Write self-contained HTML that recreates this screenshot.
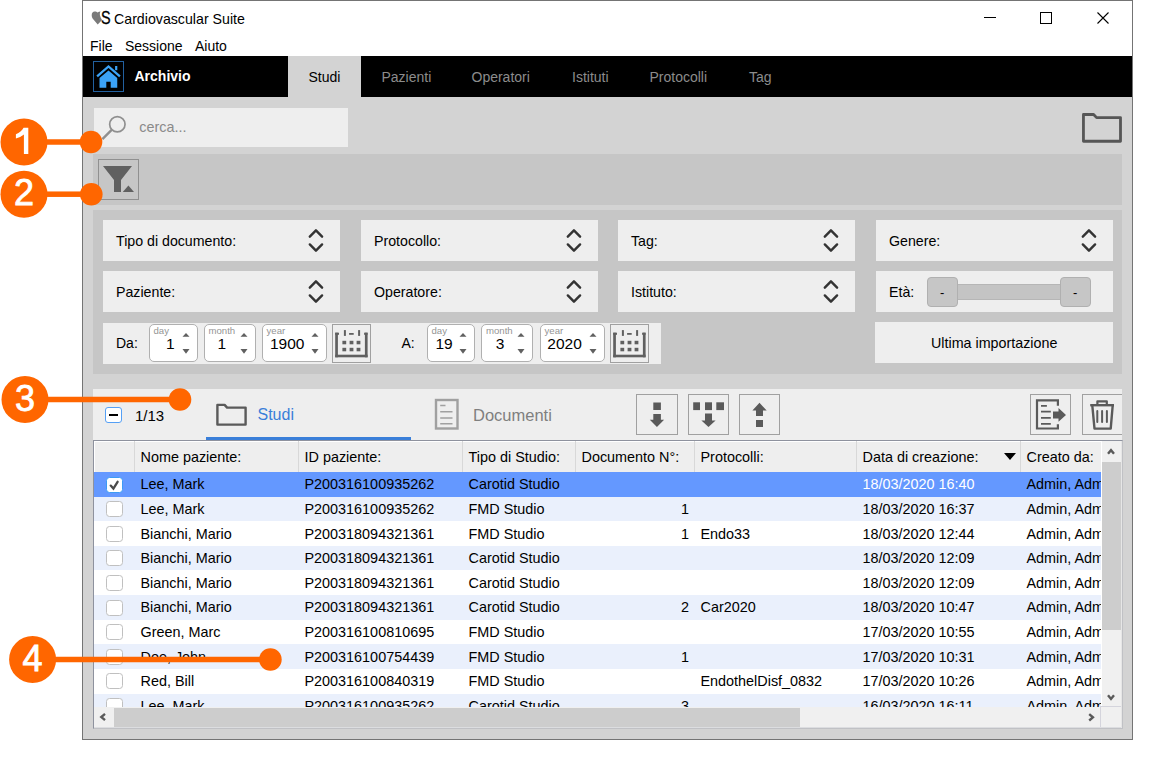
<!DOCTYPE html>
<html><head><meta charset="utf-8">
<style>
*{box-sizing:border-box;margin:0;padding:0}
html,body{width:1153px;height:760px;overflow:hidden;background:#fff;font-family:"Liberation Sans",sans-serif;color:#000;position:relative}
.a{position:absolute}
.t{position:absolute;white-space:pre}
svg{position:absolute;overflow:visible}
</style></head><body>
<div class="a" style="left:82px;top:0px;width:1051px;height:740px;background:#d3d3d3;border:1px solid #747474;"></div>
<div class="a" style="left:83px;top:1px;width:1049px;height:55px;background:#fff;"></div>
<svg style="left:88px;top:9.1px" width="24" height="20" viewBox="0 0 24 20"><path d="M3.7 6.2 C3.7 3.8 5 2.5 6.6 2.5 C8 2.5 9 3 9.7 3.6 C10.4 3 11.3 2.6 12.5 2.6 C11.8 3.8 11.7 5.2 12 6.4 C12.3 8 13 9.6 14 10.9 L9.7 15.4 L4.6 9.4 C4 8.5 3.7 7.4 3.7 6.2 Z" fill="#7a7a7a"/></svg>
<div class="t" style="left:101px;top:7.1px;font-size:18.5px;line-height:21px;transform:scaleX(0.78);transform-origin:0 0;color:#000;-webkit-text-stroke:0.35px #000">S</div>
<div class="t" style="left:114px;top:11.08px;font-size:14.2px;line-height:16px;color:#000;">Cardiovascular Suite</div>
<div class="a" style="left:984px;top:17px;width:12px;height:1px;background:#000;"></div>
<div class="a" style="left:1040px;top:12px;width:12px;height:12px;border:1px solid #000;"></div>
<svg style="left:1097px;top:12px" width="12" height="12" viewBox="0 0 12 12"><path d="M0.5 0.5 L11.5 11.5 M11.5 0.5 L0.5 11.5" stroke="#000" stroke-width="1.1"/></svg>
<div class="t" style="left:90px;top:37.65px;font-size:14px;line-height:16px;">File</div>
<div class="t" style="left:125px;top:37.65px;font-size:14px;line-height:16px;">Sessione</div>
<div class="t" style="left:195px;top:37.65px;font-size:14px;line-height:16px;">Aiuto</div>
<div class="a" style="left:83px;top:56px;width:1049px;height:41px;background:#000;"></div>
<div class="a" style="left:288px;top:56px;width:73px;height:41px;background:#d3d3d3;"></div>
<div class="a" style="left:93px;top:61px;width:31px;height:31px;border:1px solid #22609f;"></div>
<svg style="left:93px;top:61px" width="31" height="31" viewBox="0 0 31 31"><path d="M6.5 16.9 L15.5 9.4 L24.25 16.9 L24.25 26.7 L17.7 26.7 L17.7 20.8 L13.3 20.8 L13.3 26.7 L6.5 26.7 Z" fill="#3ba2f6"/><rect x="22.1" y="5" width="2.2" height="4.2" fill="#3ba2f6"/><path d="M4.1 15.3 L15.5 5.4 L26.9 15.3" stroke="#3ba2f6" stroke-width="2.3" fill="none"/></svg>
<div class="t" style="left:134.5px;top:68.15px;font-size:14px;line-height:16px;color:#fff;font-weight:700;">Archivio</div>
<div class="t" style="left:308.5px;top:69.15px;font-size:14px;line-height:16px;color:#000;">Studi</div>
<div class="t" style="left:381.5px;top:69.15px;font-size:14px;line-height:16px;color:#8c8c8c;">Pazienti</div>
<div class="t" style="left:471.5px;top:69.15px;font-size:14px;line-height:16px;color:#8c8c8c;">Operatori</div>
<div class="t" style="left:572px;top:69.15px;font-size:14px;line-height:16px;color:#8c8c8c;">Istituti</div>
<div class="t" style="left:649.5px;top:69.15px;font-size:14px;line-height:16px;color:#8c8c8c;">Protocolli</div>
<div class="t" style="left:749px;top:69.15px;font-size:14px;line-height:16px;color:#8c8c8c;">Tag</div>
<div class="a" style="left:94px;top:108px;width:254px;height:39px;background:#eeeeee;"></div>
<svg style="left:98px;top:114px" width="30" height="28" viewBox="0 0 30 28"><circle cx="19.35" cy="10.25" r="7.7" stroke="#8f8f8f" stroke-width="1.7" fill="none"/><path d="M13.9 15.7 L4.4 25.2" stroke="#8f8f8f" stroke-width="2.4"/></svg>
<div class="t" style="left:139.3px;top:118.51px;font-size:14.4px;line-height:17px;color:#8a8a8a;">cerca...</div>
<svg style="left:1082px;top:113px" width="41" height="30" viewBox="0 0 41 30"><path d="M1.45 1.5 L11.6 1.5 L14.6 4.6 L38.5 4.6 L38.5 28.25 L1.45 28.25 Z" stroke="#565656" stroke-width="2.8" fill="none" stroke-linejoin="round"/></svg>
<div class="a" style="left:93px;top:154px;width:1029px;height:51px;background:#c6c6c6;"></div>
<div class="a" style="left:98px;top:159px;width:41px;height:41px;border:1px solid #909090;"></div>
<svg style="left:98px;top:159px" width="41" height="41" viewBox="0 0 41 41"><path d="M5 7 L34 7 L23 21 L23 33 L16 33 L16 21 Z" fill="#606060"/><path d="M24.8 33 L30.4 26.5 L36 33 Z" fill="#606060"/></svg>
<div class="a" style="left:93px;top:210px;width:1029px;height:164px;background:#c6c6c6;"></div>
<div class="a" style="left:103px;top:220px;width:237px;height:41px;background:#eeeeee;"></div>
<div class="t" style="left:116px;top:232.58px;font-size:14.2px;line-height:16px;">Tipo di documento:</div>
<svg style="left:307.5px;top:228px" width="16" height="24" viewBox="0 0 16 24"><path d="M1.8 8.7 L7.95 2.3 L14.1 8.7 M1.8 16.4 L7.95 22.7 L14.1 16.4" stroke="#333" stroke-width="2.4" fill="none" stroke-linecap="round" stroke-linejoin="round"/></svg>
<div class="a" style="left:361px;top:220px;width:237px;height:41px;background:#eeeeee;"></div>
<div class="t" style="left:374px;top:232.58px;font-size:14.2px;line-height:16px;">Protocollo:</div>
<svg style="left:565.5px;top:228px" width="16" height="24" viewBox="0 0 16 24"><path d="M1.8 8.7 L7.95 2.3 L14.1 8.7 M1.8 16.4 L7.95 22.7 L14.1 16.4" stroke="#333" stroke-width="2.4" fill="none" stroke-linecap="round" stroke-linejoin="round"/></svg>
<div class="a" style="left:618px;top:220px;width:237px;height:41px;background:#eeeeee;"></div>
<div class="t" style="left:631px;top:232.58px;font-size:14.2px;line-height:16px;">Tag:</div>
<svg style="left:822.5px;top:228px" width="16" height="24" viewBox="0 0 16 24"><path d="M1.8 8.7 L7.95 2.3 L14.1 8.7 M1.8 16.4 L7.95 22.7 L14.1 16.4" stroke="#333" stroke-width="2.4" fill="none" stroke-linecap="round" stroke-linejoin="round"/></svg>
<div class="a" style="left:876px;top:220px;width:237px;height:41px;background:#eeeeee;"></div>
<div class="t" style="left:889px;top:232.58px;font-size:14.2px;line-height:16px;">Genere:</div>
<svg style="left:1080.5px;top:228px" width="16" height="24" viewBox="0 0 16 24"><path d="M1.8 8.7 L7.95 2.3 L14.1 8.7 M1.8 16.4 L7.95 22.7 L14.1 16.4" stroke="#333" stroke-width="2.4" fill="none" stroke-linecap="round" stroke-linejoin="round"/></svg>
<div class="a" style="left:103px;top:271px;width:237px;height:41px;background:#eeeeee;"></div>
<div class="t" style="left:116px;top:283.58px;font-size:14.2px;line-height:16px;">Paziente:</div>
<svg style="left:307.5px;top:279px" width="16" height="24" viewBox="0 0 16 24"><path d="M1.8 8.7 L7.95 2.3 L14.1 8.7 M1.8 16.4 L7.95 22.7 L14.1 16.4" stroke="#333" stroke-width="2.4" fill="none" stroke-linecap="round" stroke-linejoin="round"/></svg>
<div class="a" style="left:361px;top:271px;width:237px;height:41px;background:#eeeeee;"></div>
<div class="t" style="left:374px;top:283.58px;font-size:14.2px;line-height:16px;">Operatore:</div>
<svg style="left:565.5px;top:279px" width="16" height="24" viewBox="0 0 16 24"><path d="M1.8 8.7 L7.95 2.3 L14.1 8.7 M1.8 16.4 L7.95 22.7 L14.1 16.4" stroke="#333" stroke-width="2.4" fill="none" stroke-linecap="round" stroke-linejoin="round"/></svg>
<div class="a" style="left:618px;top:271px;width:237px;height:41px;background:#eeeeee;"></div>
<div class="t" style="left:631px;top:283.58px;font-size:14.2px;line-height:16px;">Istituto:</div>
<svg style="left:822.5px;top:279px" width="16" height="24" viewBox="0 0 16 24"><path d="M1.8 8.7 L7.95 2.3 L14.1 8.7 M1.8 16.4 L7.95 22.7 L14.1 16.4" stroke="#333" stroke-width="2.4" fill="none" stroke-linecap="round" stroke-linejoin="round"/></svg>
<div class="a" style="left:876px;top:271px;width:237px;height:41px;background:#eeeeee;"></div>
<div class="t" style="left:889px;top:283.58px;font-size:14.2px;line-height:16px;">Età:</div>
<div class="a" style="left:927px;top:284px;width:163px;height:16px;background:#c4c4c4;border-top:1px solid #b6b6b6;border-bottom:1px solid #b6b6b6;"></div>
<div class="a" style="left:927px;top:277px;width:31px;height:30px;background:#c6c6c6;border:1px solid #b0b0b0;border-radius:4px;"></div>
<div class="a" style="left:1060px;top:277px;width:31px;height:30px;background:#c6c6c6;border:1px solid #b0b0b0;border-radius:4px;"></div>
<div class="t" style="left:940px;top:285.00px;font-size:13px;line-height:15px;">-</div>
<div class="t" style="left:1073px;top:285.00px;font-size:13px;line-height:15px;">-</div>
<div class="a" style="left:103px;top:323px;width:558px;height:41px;background:#eeeeee;"></div>
<div class="t" style="left:116px;top:335.15px;font-size:14px;line-height:16px;">Da:</div>
<div class="t" style="left:401.5px;top:335.15px;font-size:14px;line-height:16px;">A:</div>
<div class="a" style="left:148.5px;top:324px;width:49px;height:38px;background:#fff;border:1px solid #b0b0b0;border-radius:5px;"></div>
<div class="t" style="left:153.5px;top:325.17px;font-size:9.6px;line-height:11px;color:#959595;">day</div>
<div class="t" style="left:166.1px;top:335.03px;font-size:15.5px;line-height:18px;">1</div>
<svg style="left:181.9px;top:332px" width="8" height="23" viewBox="0 0 8 23"><path d="M0.5 4.8 L4 1.1 L7.5 4.8 Z M0.5 17.1 L4 21.8 L7.5 17.1 Z" fill="#606060"/></svg>
<div class="a" style="left:203.5px;top:324px;width:52px;height:38px;background:#fff;border:1px solid #b0b0b0;border-radius:5px;"></div>
<div class="t" style="left:208.5px;top:325.17px;font-size:9.6px;line-height:11px;color:#959595;">month</div>
<div class="t" style="left:217.6px;top:335.03px;font-size:15.5px;line-height:18px;">1</div>
<svg style="left:239.9px;top:332px" width="8" height="23" viewBox="0 0 8 23"><path d="M0.5 4.8 L4 1.1 L7.5 4.8 Z M0.5 17.1 L4 21.8 L7.5 17.1 Z" fill="#606060"/></svg>
<div class="a" style="left:261.5px;top:324px;width:65px;height:38px;background:#fff;border:1px solid #b0b0b0;border-radius:5px;"></div>
<div class="t" style="left:266.5px;top:325.17px;font-size:9.6px;line-height:11px;color:#959595;">year</div>
<div class="t" style="left:270px;top:335.03px;font-size:15.5px;line-height:18px;">1900</div>
<svg style="left:310.9px;top:332px" width="8" height="23" viewBox="0 0 8 23"><path d="M0.5 4.8 L4 1.1 L7.5 4.8 Z M0.5 17.1 L4 21.8 L7.5 17.1 Z" fill="#606060"/></svg>
<div class="a" style="left:426.5px;top:324px;width:48px;height:38px;background:#fff;border:1px solid #b0b0b0;border-radius:5px;"></div>
<div class="t" style="left:431.5px;top:325.17px;font-size:9.6px;line-height:11px;color:#959595;">day</div>
<div class="t" style="left:435.5px;top:335.03px;font-size:15.5px;line-height:18px;">19</div>
<svg style="left:458.9px;top:332px" width="8" height="23" viewBox="0 0 8 23"><path d="M0.5 4.8 L4 1.1 L7.5 4.8 Z M0.5 17.1 L4 21.8 L7.5 17.1 Z" fill="#606060"/></svg>
<div class="a" style="left:481px;top:324px;width:52px;height:38px;background:#fff;border:1px solid #b0b0b0;border-radius:5px;"></div>
<div class="t" style="left:486px;top:325.17px;font-size:9.6px;line-height:11px;color:#959595;">month</div>
<div class="t" style="left:495.8px;top:335.03px;font-size:15.5px;line-height:18px;">3</div>
<svg style="left:517.4px;top:332px" width="8" height="23" viewBox="0 0 8 23"><path d="M0.5 4.8 L4 1.1 L7.5 4.8 Z M0.5 17.1 L4 21.8 L7.5 17.1 Z" fill="#606060"/></svg>
<div class="a" style="left:539.5px;top:324px;width:65px;height:38px;background:#fff;border:1px solid #b0b0b0;border-radius:5px;"></div>
<div class="t" style="left:544.5px;top:325.17px;font-size:9.6px;line-height:11px;color:#959595;">year</div>
<div class="t" style="left:547.3px;top:335.03px;font-size:15.5px;line-height:18px;">2020</div>
<svg style="left:588.9px;top:332px" width="8" height="23" viewBox="0 0 8 23"><path d="M0.5 4.8 L4 1.1 L7.5 4.8 Z M0.5 17.1 L4 21.8 L7.5 17.1 Z" fill="#606060"/></svg>
<div class="a" style="left:332px;top:324px;width:39px;height:39px;background:#eeeeee;border:1px solid #a0a0a0;"></div>
<svg style="left:332px;top:324px" width="39" height="39" viewBox="0 0 39 39"><rect x="3.2" y="8.7" width="2.7" height="24.6" fill="#606060"/><rect x="3.2" y="8.7" width="3.8" height="2.1" fill="#606060"/><rect x="32.9" y="8.7" width="2.7" height="24.6" fill="#606060"/><rect x="32.1" y="8.7" width="3.5" height="2.1" fill="#606060"/><rect x="3.2" y="30.7" width="32.4" height="2.6" fill="#606060"/><rect x="11.9" y="6.1" width="2" height="5.8" fill="#606060"/><rect x="26.1" y="6.1" width="2" height="5.8" fill="#606060"/><rect x="17.1" y="9" width="4.6" height="1.8" fill="#606060"/><rect x="10.4" y="16.8" width="3.8" height="3.5" fill="#606060"/><rect x="10.4" y="23.8" width="3.8" height="3.5" fill="#606060"/><rect x="17.6" y="16.8" width="3.8" height="3.5" fill="#606060"/><rect x="17.6" y="23.8" width="3.8" height="3.5" fill="#606060"/><rect x="24.6" y="16.8" width="3.8" height="3.5" fill="#606060"/><rect x="24.6" y="23.8" width="3.8" height="3.5" fill="#606060"/></svg>
<div class="a" style="left:610px;top:324px;width:39px;height:39px;background:#eeeeee;border:1px solid #a0a0a0;"></div>
<svg style="left:610px;top:324px" width="39" height="39" viewBox="0 0 39 39"><rect x="3.2" y="8.7" width="2.7" height="24.6" fill="#606060"/><rect x="3.2" y="8.7" width="3.8" height="2.1" fill="#606060"/><rect x="32.9" y="8.7" width="2.7" height="24.6" fill="#606060"/><rect x="32.1" y="8.7" width="3.5" height="2.1" fill="#606060"/><rect x="3.2" y="30.7" width="32.4" height="2.6" fill="#606060"/><rect x="11.9" y="6.1" width="2" height="5.8" fill="#606060"/><rect x="26.1" y="6.1" width="2" height="5.8" fill="#606060"/><rect x="17.1" y="9" width="4.6" height="1.8" fill="#606060"/><rect x="10.4" y="16.8" width="3.8" height="3.5" fill="#606060"/><rect x="10.4" y="23.8" width="3.8" height="3.5" fill="#606060"/><rect x="17.6" y="16.8" width="3.8" height="3.5" fill="#606060"/><rect x="17.6" y="23.8" width="3.8" height="3.5" fill="#606060"/><rect x="24.6" y="16.8" width="3.8" height="3.5" fill="#606060"/><rect x="24.6" y="23.8" width="3.8" height="3.5" fill="#606060"/></svg>
<div class="a" style="left:875px;top:322px;width:238px;height:41px;background:#eeeeee;"></div>
<div class="t" style="left:931px;top:335.05px;font-size:14.3px;line-height:16px;">Ultima importazione</div>
<div class="a" style="left:93px;top:389px;width:1029px;height:51px;background:#eeeeee;"></div>
<div class="a" style="left:105px;top:406.5px;width:17px;height:16.6px;background:#fff;border:1px solid #55a0f5;border-radius:3px;"></div>
<div class="a" style="left:109px;top:414px;width:9px;height:2px;background:#000;"></div>
<div class="t" style="left:135px;top:407.30px;font-size:15px;line-height:17px;">1/13</div>
<svg style="left:215px;top:403px" width="33" height="24" viewBox="0 0 33 24"><path d="M2.4 1.9 L9.6 1.9 L12.1 4.6 L30.6 4.6 L30.6 21.6 L2.4 21.6 Z" stroke="#5a5a5a" stroke-width="2.4" fill="none" stroke-linejoin="round"/></svg>
<div class="t" style="left:257.5px;top:405.96px;font-size:16px;line-height:18px;color:#3a7fd9;">Studi</div>
<div class="a" style="left:206px;top:437px;width:205px;height:3px;background:#3a7fd9;"></div>
<svg style="left:434px;top:398px" width="26" height="33" viewBox="0 0 26 33"><rect x="2" y="2" width="21.5" height="28.5" stroke="#a0a0a0" stroke-width="2.4" fill="none"/><path d="M6.2 7.5 L11.5 7.5 M6.2 13.8 L18.5 13.8 M6.2 20 L18.5 20 M6.2 25.8 L18.5 25.8" stroke="#a0a0a0" stroke-width="1.6"/></svg>
<div class="t" style="left:473px;top:406.08px;font-size:16.5px;line-height:19px;color:#7f7f7f;">Documenti</div>
<div class="a" style="left:636px;top:394px;width:42px;height:41px;border:1px solid #a0a0a0;"></div>
<svg style="left:636px;top:394px" width="42" height="41" viewBox="0 0 42 41"><rect x="17.3" y="8.5" width="7.6" height="7.5" fill="#5a5a5a"/><path d="M17.3 19.9 L24.9 19.9 L24.9 25.8 L28.1 25.8 L20.95 33 L13.8 25.8 L17.3 25.8 Z" fill="#5a5a5a"/></svg>
<div class="a" style="left:688px;top:394px;width:41px;height:41px;border:1px solid #a0a0a0;"></div>
<svg style="left:688px;top:394px" width="41" height="41" viewBox="0 0 41 41"><rect x="5.2" y="8.3" width="6.8" height="7.8" fill="#5a5a5a"/><rect x="17" y="8.3" width="7" height="7.8" fill="#5a5a5a"/><rect x="28.3" y="8.3" width="7.7" height="7.8" fill="#5a5a5a"/><path d="M17 19.5 L24 19.5 L24 26.4 L27.6 26.4 L20.5 33 L13.4 26.4 L17 26.4 Z" fill="#5a5a5a"/></svg>
<div class="a" style="left:739px;top:394px;width:41px;height:41px;border:1px solid #a0a0a0;"></div>
<svg style="left:739px;top:394px" width="41" height="41" viewBox="0 0 41 41"><path d="M20.5 8.7 L27.7 16.6 L24 16.6 L24 21.9 L17 21.9 L17 16.6 L13.4 16.6 Z" fill="#5a5a5a"/><rect x="17" y="26" width="7" height="7" fill="#5a5a5a"/></svg>
<div class="a" style="left:1030px;top:394px;width:41px;height:41px;border:1px solid #a0a0a0;"></div>
<svg style="left:1030px;top:394px" width="41" height="41" viewBox="0 0 41 41"><path d="M27.9 11.8 L27.9 6.3 L7 6.3 L7 34.5 L27.9 34.5 L27.9 30.2" stroke="#5a5a5a" stroke-width="2.2" fill="none"/><path d="M11 11.8 L16.9 11.8 M11 17.7 L20.8 17.7 M11 23.8 L20.8 23.8 M11 29.8 L20.8 29.8" stroke="#5a5a5a" stroke-width="1.8"/><path d="M23 17.6 L28.5 17.6 L28.5 14 L36 21 L28.5 27.8 L28.5 24.4 L23 24.4 Z" fill="#5a5a5a"/></svg>
<div class="a" style="left:1082px;top:394px;width:40px;height:41px;border:1px solid #a0a0a0;border-right:none;"></div>
<svg style="left:1082px;top:394px" width="40" height="41" viewBox="0 0 40 41"><path d="M8.2 11.2 L32 11.2" stroke="#5a5a5a" stroke-width="2.4"/><path d="M15.4 10.5 L15.4 7.3 L24.8 7.3 L24.8 10.5" stroke="#5a5a5a" stroke-width="2.2" fill="none" stroke-linejoin="round"/><path d="M10.3 11.5 L12.5 34.6 L28.7 34.6 L30.7 11.5" stroke="#5a5a5a" stroke-width="2.4" fill="none" stroke-linejoin="round"/><path d="M15.3 17 L15.3 28.1 M20.1 17 L20.1 28.1 M24.9 17 L24.9 28.1" stroke="#5a5a5a" stroke-width="2" stroke-linecap="round"/></svg>
<div class="a" style="left:93px;top:440px;width:1030px;height:289px;background:#fff;border-left:1px solid #8e929e;border-top:1px solid #8e929e;border-right:1px solid #c0c1c5;border-bottom:1px solid #c0c1c5;"></div>
<div class="a" style="left:94px;top:441px;width:1028px;height:1px;background:#fff;"></div>
<div class="a" style="left:94px;top:441px;width:1px;height:287px;background:#fff;"></div>
<div class="a" style="left:95px;top:442px;width:1006px;height:30px;background:#eeeeee;"></div>
<div class="a" style="left:134.0px;top:441px;width:1px;height:31px;background:#d8d8d8;"></div>
<div class="a" style="left:298.0px;top:441px;width:1px;height:31px;background:#d8d8d8;"></div>
<div class="a" style="left:462.0px;top:441px;width:1px;height:31px;background:#d8d8d8;"></div>
<div class="a" style="left:575.0px;top:441px;width:1px;height:31px;background:#d8d8d8;"></div>
<div class="a" style="left:694.0px;top:441px;width:1px;height:31px;background:#d8d8d8;"></div>
<div class="a" style="left:856.0px;top:441px;width:1px;height:31px;background:#d8d8d8;"></div>
<div class="a" style="left:1020.0px;top:441px;width:1px;height:31px;background:#d8d8d8;"></div>
<div class="t" style="left:140.5px;top:448.51px;font-size:14.4px;line-height:17px;">Nome paziente:</div>
<div class="t" style="left:304.5px;top:448.51px;font-size:14.4px;line-height:17px;">ID paziente:</div>
<div class="t" style="left:468.5px;top:448.51px;font-size:14.4px;line-height:17px;">Tipo di Studio:</div>
<div class="t" style="left:581.5px;top:448.51px;font-size:14.4px;line-height:17px;">Documento N°:</div>
<div class="t" style="left:700.5px;top:448.51px;font-size:14.4px;line-height:17px;">Protocolli:</div>
<div class="t" style="left:862.5px;top:448.51px;font-size:14.4px;line-height:17px;">Data di creazione:</div>
<div class="t" style="left:1026.5px;top:448.51px;font-size:14.4px;line-height:17px;">Creato da:</div>
<svg style="left:1004px;top:453px" width="12" height="7" viewBox="0 0 12 7"><path d="M0 0 L12 0 L6 7 Z" fill="#000"/></svg>
<div class="a" style="left:94px;top:472px;width:1007px;height:235px;overflow:hidden">
<div class="a" style="left:0;top:0.0px;width:1007px;height:24.62px;background:#6498ff"></div>
<div class="a" style="left:12.4px;top:4.5px;width:16.2px;height:16px;background:#fff;border:1px solid #3d9bf5;border-radius:3.5px"></div>
<svg style="left:12.4px;top:4.5px" width="16" height="16" viewBox="0 0 16 16"><path d="M4.7 8.6 L7.4 11.6 L11.6 4.8" stroke="#4a4a4a" stroke-width="2.3" fill="none" stroke-linecap="round"/></svg>
<div class="t" style="left:46.5px;top:4.300000000000001px;font-size:14.4px;line-height:17px;color:#000">Lee, Mark</div>
<div class="t" style="left:210.5px;top:4.300000000000001px;font-size:14.4px;line-height:17px;color:#000">P200316100935262</div>
<div class="t" style="left:374.5px;top:4.300000000000001px;font-size:14.4px;line-height:17px;color:#000">Carotid Studio</div>
<div class="t" style="left:768.5px;top:4.300000000000001px;font-size:14.4px;line-height:17px;color:#fff">18/03/2020 16:40</div>
<div class="t" style="left:932.5px;top:4.300000000000001px;font-size:14.4px;line-height:17px;color:#000">Admin, Admin</div>
<div class="a" style="left:0;top:24.62px;width:1007px;height:24.62px;background:#eaf0fc"></div>
<div class="a" style="left:12.4px;top:29.12px;width:16.2px;height:16px;background:#fff;border:1px solid #c0c0c0;border-radius:3.5px"></div>
<div class="t" style="left:46.5px;top:28.92px;font-size:14.4px;line-height:17px;color:#000">Lee, Mark</div>
<div class="t" style="left:210.5px;top:28.92px;font-size:14.4px;line-height:17px;color:#000">P200316100935262</div>
<div class="t" style="left:374.5px;top:28.92px;font-size:14.4px;line-height:17px;color:#000">FMD Studio</div>
<div class="t" style="left:495px;width:100px;text-align:right;top:28.92px;font-size:14.4px;line-height:17px">1</div>
<div class="t" style="left:768.5px;top:28.92px;font-size:14.4px;line-height:17px;color:#000">18/03/2020 16:37</div>
<div class="t" style="left:932.5px;top:28.92px;font-size:14.4px;line-height:17px;color:#000">Admin, Admin</div>
<div class="a" style="left:0;top:49.24px;width:1007px;height:24.62px;background:#ffffff"></div>
<div class="a" style="left:12.4px;top:53.74px;width:16.2px;height:16px;background:#fff;border:1px solid #c0c0c0;border-radius:3.5px"></div>
<div class="t" style="left:46.5px;top:53.540000000000006px;font-size:14.4px;line-height:17px;color:#000">Bianchi, Mario</div>
<div class="t" style="left:210.5px;top:53.540000000000006px;font-size:14.4px;line-height:17px;color:#000">P200318094321361</div>
<div class="t" style="left:374.5px;top:53.540000000000006px;font-size:14.4px;line-height:17px;color:#000">FMD Studio</div>
<div class="t" style="left:495px;width:100px;text-align:right;top:53.540000000000006px;font-size:14.4px;line-height:17px">1</div>
<div class="t" style="left:606.5px;top:53.540000000000006px;font-size:14.4px;line-height:17px;color:#000">Endo33</div>
<div class="t" style="left:768.5px;top:53.540000000000006px;font-size:14.4px;line-height:17px;color:#000">18/03/2020 12:44</div>
<div class="t" style="left:932.5px;top:53.540000000000006px;font-size:14.4px;line-height:17px;color:#000">Admin, Admin</div>
<div class="a" style="left:0;top:73.86px;width:1007px;height:24.62px;background:#eaf0fc"></div>
<div class="a" style="left:12.4px;top:78.36px;width:16.2px;height:16px;background:#fff;border:1px solid #c0c0c0;border-radius:3.5px"></div>
<div class="t" style="left:46.5px;top:78.16px;font-size:14.4px;line-height:17px;color:#000">Bianchi, Mario</div>
<div class="t" style="left:210.5px;top:78.16px;font-size:14.4px;line-height:17px;color:#000">P200318094321361</div>
<div class="t" style="left:374.5px;top:78.16px;font-size:14.4px;line-height:17px;color:#000">Carotid Studio</div>
<div class="t" style="left:768.5px;top:78.16px;font-size:14.4px;line-height:17px;color:#000">18/03/2020 12:09</div>
<div class="t" style="left:932.5px;top:78.16px;font-size:14.4px;line-height:17px;color:#000">Admin, Admin</div>
<div class="a" style="left:0;top:98.48px;width:1007px;height:24.62px;background:#ffffff"></div>
<div class="a" style="left:12.4px;top:102.98px;width:16.2px;height:16px;background:#fff;border:1px solid #c0c0c0;border-radius:3.5px"></div>
<div class="t" style="left:46.5px;top:102.78px;font-size:14.4px;line-height:17px;color:#000">Bianchi, Mario</div>
<div class="t" style="left:210.5px;top:102.78px;font-size:14.4px;line-height:17px;color:#000">P200318094321361</div>
<div class="t" style="left:374.5px;top:102.78px;font-size:14.4px;line-height:17px;color:#000">Carotid Studio</div>
<div class="t" style="left:768.5px;top:102.78px;font-size:14.4px;line-height:17px;color:#000">18/03/2020 12:09</div>
<div class="t" style="left:932.5px;top:102.78px;font-size:14.4px;line-height:17px;color:#000">Admin, Admin</div>
<div class="a" style="left:0;top:123.10000000000001px;width:1007px;height:24.62px;background:#eaf0fc"></div>
<div class="a" style="left:12.4px;top:127.60000000000001px;width:16.2px;height:16px;background:#fff;border:1px solid #c0c0c0;border-radius:3.5px"></div>
<div class="t" style="left:46.5px;top:127.4px;font-size:14.4px;line-height:17px;color:#000">Bianchi, Mario</div>
<div class="t" style="left:210.5px;top:127.4px;font-size:14.4px;line-height:17px;color:#000">P200318094321361</div>
<div class="t" style="left:374.5px;top:127.4px;font-size:14.4px;line-height:17px;color:#000">Carotid Studio</div>
<div class="t" style="left:495px;width:100px;text-align:right;top:127.4px;font-size:14.4px;line-height:17px">2</div>
<div class="t" style="left:606.5px;top:127.4px;font-size:14.4px;line-height:17px;color:#000">Car2020</div>
<div class="t" style="left:768.5px;top:127.4px;font-size:14.4px;line-height:17px;color:#000">18/03/2020 10:47</div>
<div class="t" style="left:932.5px;top:127.4px;font-size:14.4px;line-height:17px;color:#000">Admin, Admin</div>
<div class="a" style="left:0;top:147.72px;width:1007px;height:24.62px;background:#ffffff"></div>
<div class="a" style="left:12.4px;top:152.22px;width:16.2px;height:16px;background:#fff;border:1px solid #c0c0c0;border-radius:3.5px"></div>
<div class="t" style="left:46.5px;top:152.02px;font-size:14.4px;line-height:17px;color:#000">Green, Marc</div>
<div class="t" style="left:210.5px;top:152.02px;font-size:14.4px;line-height:17px;color:#000">P200316100810695</div>
<div class="t" style="left:374.5px;top:152.02px;font-size:14.4px;line-height:17px;color:#000">FMD Studio</div>
<div class="t" style="left:768.5px;top:152.02px;font-size:14.4px;line-height:17px;color:#000">17/03/2020 10:55</div>
<div class="t" style="left:932.5px;top:152.02px;font-size:14.4px;line-height:17px;color:#000">Admin, Admin</div>
<div class="a" style="left:0;top:172.34px;width:1007px;height:24.62px;background:#eaf0fc"></div>
<div class="a" style="left:12.4px;top:176.84px;width:16.2px;height:16px;background:#fff;border:1px solid #c0c0c0;border-radius:3.5px"></div>
<div class="t" style="left:46.5px;top:176.64000000000001px;font-size:14.4px;line-height:17px;color:#000">Doe, John</div>
<div class="t" style="left:210.5px;top:176.64000000000001px;font-size:14.4px;line-height:17px;color:#000">P200316100754439</div>
<div class="t" style="left:374.5px;top:176.64000000000001px;font-size:14.4px;line-height:17px;color:#000">FMD Studio</div>
<div class="t" style="left:495px;width:100px;text-align:right;top:176.64000000000001px;font-size:14.4px;line-height:17px">1</div>
<div class="t" style="left:768.5px;top:176.64000000000001px;font-size:14.4px;line-height:17px;color:#000">17/03/2020 10:31</div>
<div class="t" style="left:932.5px;top:176.64000000000001px;font-size:14.4px;line-height:17px;color:#000">Admin, Admin</div>
<div class="a" style="left:0;top:196.96px;width:1007px;height:24.62px;background:#ffffff"></div>
<div class="a" style="left:12.4px;top:201.46px;width:16.2px;height:16px;background:#fff;border:1px solid #c0c0c0;border-radius:3.5px"></div>
<div class="t" style="left:46.5px;top:201.26000000000002px;font-size:14.4px;line-height:17px;color:#000">Red, Bill</div>
<div class="t" style="left:210.5px;top:201.26000000000002px;font-size:14.4px;line-height:17px;color:#000">P200316100840319</div>
<div class="t" style="left:374.5px;top:201.26000000000002px;font-size:14.4px;line-height:17px;color:#000">FMD Studio</div>
<div class="t" style="left:606.5px;top:201.26000000000002px;font-size:14.4px;line-height:17px;color:#000">EndothelDisf_0832</div>
<div class="t" style="left:768.5px;top:201.26000000000002px;font-size:14.4px;line-height:17px;color:#000">17/03/2020 10:26</div>
<div class="t" style="left:932.5px;top:201.26000000000002px;font-size:14.4px;line-height:17px;color:#000">Admin, Admin</div>
<div class="a" style="left:0;top:221.58px;width:1007px;height:24.62px;background:#eaf0fc"></div>
<div class="a" style="left:12.4px;top:226.08px;width:16.2px;height:16px;background:#fff;border:1px solid #c0c0c0;border-radius:3.5px"></div>
<div class="t" style="left:46.5px;top:225.88000000000002px;font-size:14.4px;line-height:17px;color:#000">Lee, Mark</div>
<div class="t" style="left:210.5px;top:225.88000000000002px;font-size:14.4px;line-height:17px;color:#000">P200316100935262</div>
<div class="t" style="left:374.5px;top:225.88000000000002px;font-size:14.4px;line-height:17px;color:#000">Carotid Studio</div>
<div class="t" style="left:495px;width:100px;text-align:right;top:225.88000000000002px;font-size:14.4px;line-height:17px">3</div>
<div class="t" style="left:768.5px;top:225.88000000000002px;font-size:14.4px;line-height:17px;color:#000">16/03/2020 16:11</div>
<div class="t" style="left:932.5px;top:225.88000000000002px;font-size:14.4px;line-height:17px;color:#000">Admin, Admin</div>
</div>
<div class="a" style="left:1101px;top:441px;width:21px;height:266px;background:#f0f0f0;border-left:1px solid #fff;"></div>
<div class="a" style="left:1102px;top:462px;width:19px;height:168px;background:#cdcdcd;"></div>
<svg style="left:1106px;top:448px" width="10" height="8" viewBox="0 0 10 8"><path d="M2 5.8 L5 2.2 L8 5.8" stroke="#5a5a5a" stroke-width="2.4" fill="none"/></svg>
<svg style="left:1106px;top:693px" width="10" height="8" viewBox="0 0 10 8"><path d="M2 2.2 L5 5.9 L8 2.2" stroke="#5a5a5a" stroke-width="2.4" fill="none"/></svg>
<div class="a" style="left:94px;top:707px;width:1007px;height:20px;background:#f0f0f0;"></div>
<div class="a" style="left:114px;top:708px;width:686px;height:19px;background:#cdcdcd;"></div>
<svg style="left:98px;top:712px" width="10" height="10" viewBox="0 0 10 10"><path d="M7 1.9 L3.3 5 L7 8.1" stroke="#5a5a5a" stroke-width="2.4" fill="none"/></svg>
<svg style="left:1087px;top:712px" width="10" height="10" viewBox="0 0 10 10"><path d="M2.2 2.2 L5.9 5.3 L2.2 8.5" stroke="#5a5a5a" stroke-width="2.4" fill="none"/></svg>
<div class="a" style="left:1100px;top:706px;width:22px;height:21px;background:#f0f0f0;border-top:1px solid #d4d4dc;border-left:1px solid #d4d4dc;"></div>
<div class="a" style="left:94px;top:727px;width:1028px;height:1px;background:#dcdde0;"></div>
<div class="a" style="left:1121px;top:441px;width:1px;height:287px;background:#e6e6e6;"></div>
<svg style="left:0;top:0" width="300" height="760" viewBox="0 0 300 760"><rect x="24" y="139.25" width="67" height="5.5" fill="#ff6600"/><circle cx="24" cy="142" r="23.5" fill="#ff6600"/><circle cx="91" cy="142" r="11.3" fill="#ff6600"/></svg>
<svg style="left:0;top:115px" width="50" height="50" viewBox="0 0 50 50"><path d="M28.3 12.8 L28.3 39.1 L23.9 39.1 L23.9 19.6 C21.6 21.6 18.6 22.9 15.9 23.4 L15.9 19.3 C19.5 17.9 22 15.5 23.6 12.8 Z" fill="#fff"/></svg>
<svg style="left:0;top:0" width="300" height="760" viewBox="0 0 300 760"><rect x="24" y="191.45" width="67.3" height="5.5" fill="#ff6600"/><circle cx="24" cy="194.2" r="23.5" fill="#ff6600"/><circle cx="91.3" cy="194.2" r="11.3" fill="#ff6600"/></svg>
<div class="t" style="left:0.5px;top:172.39999999999998px;width:47px;text-align:center;font-size:36px;line-height:41px;color:#fff;-webkit-text-stroke:0.8px #fff">2</div>
<svg style="left:0;top:0" width="300" height="760" viewBox="0 0 300 760"><rect x="25" y="396.75" width="155" height="5.5" fill="#ff6600"/><circle cx="25" cy="399.5" r="23.5" fill="#ff6600"/><circle cx="180" cy="399.5" r="11.3" fill="#ff6600"/></svg>
<div class="t" style="left:1.5px;top:377.7px;width:47px;text-align:center;font-size:36px;line-height:41px;color:#fff;-webkit-text-stroke:0.8px #fff">3</div>
<svg style="left:0;top:0" width="300" height="760" viewBox="0 0 300 760"><rect x="32.6" y="656.75" width="237.79999999999998" height="5.5" fill="#ff6600"/><circle cx="32.6" cy="659.5" r="23.5" fill="#ff6600"/><circle cx="270.4" cy="659.5" r="11.3" fill="#ff6600"/></svg>
<div class="t" style="left:9.100000000000001px;top:637.7px;width:47px;text-align:center;font-size:36px;line-height:41px;color:#fff;-webkit-text-stroke:0.8px #fff">4</div>
</body></html>
